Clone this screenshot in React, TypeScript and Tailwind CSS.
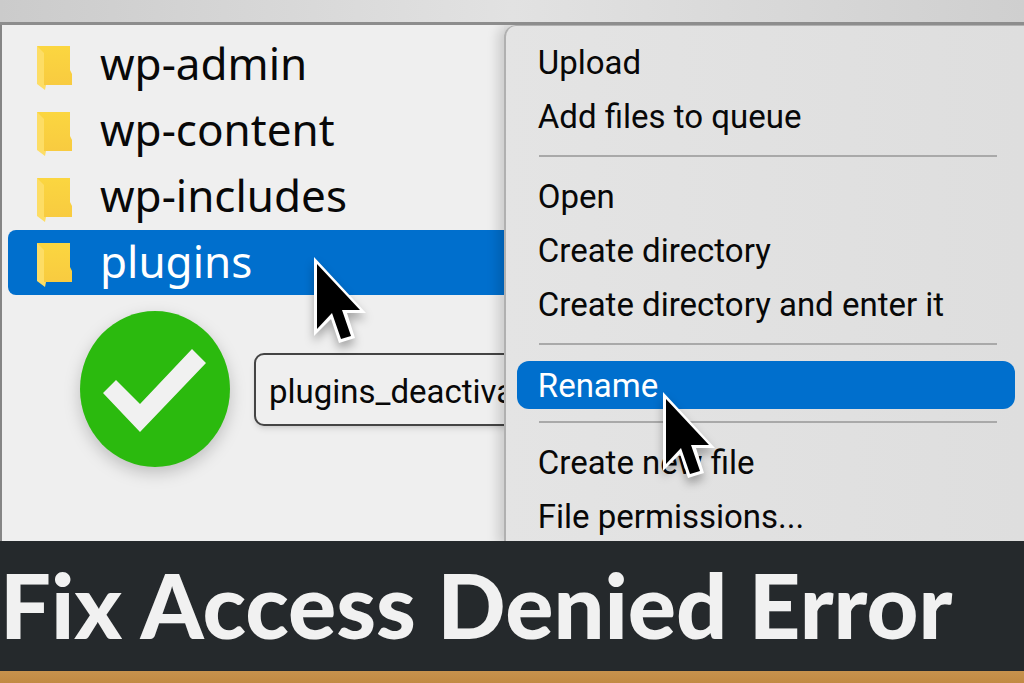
import React from "react";

interface CursorProps {
  className: string;
}

interface MenuItemProps {
  label: string;
  active?: boolean;
}

const folders = ["wp-admin", "wp-content", "wp-includes", "plugins"];

const menuGroups = [
  ["Upload", "Add files to queue"],
  ["Open", "Create directory", "Create directory and enter it"],
  ["Rename"],
  ["Create new file", "File permissions..."],
];

const FolderIcon: React.FC = () => (
  <svg viewBox="0 0 35 45" className="w-[35px] h-[45px] shrink-0 mt-1.5" aria-hidden="true">
    <defs>
      <linearGradient id="folder" x1="0" y1="0" x2="0" y2="1">
        <stop offset="0" stopColor="#fbd640" />
        <stop offset="1" stopColor="#f8cb40" />
      </linearGradient>
    </defs>
    <path d="M0 0H33V24L35 28V39H7Z" fill="url(#folder)" />
    <path d="M0 0L7 7V39H9L8 44L0 38Z" fill="#fddd65" />
  </svg>
);

const Cursor: React.FC<CursorProps> = ({ className }) => (
  <svg
    viewBox="0 0 53 88"
    className={`absolute w-[53px] h-[88px] overflow-visible drop-shadow-[0_6px_5px_rgba(0,0,0,0.3)] ${className}`}
    aria-hidden="true"
  >
    <path d="M0 0L52 56L33 56L41 81L25 86L17 62L0 79Z" fill="#fff" />
    <path d="M3 7L46 53L28 53L37 79L27 82L18 56L3 72Z" fill="#000" />
  </svg>
);

const CheckBadge: React.FC = () => (
  <svg
    viewBox="0 0 150 156"
    className="w-[150px] h-[156px] shrink-0 drop-shadow-[0_6px_8px_rgba(0,0,0,0.2)]"
    aria-hidden="true"
  >
    <ellipse cx="75" cy="78" rx="75" ry="78" fill="#2bba0e" />
    <path d="M23 82L36 69L60 93L112 38L126 52L60 121Z" fill="#f1f1f1" />
  </svg>
);

const MenuItem: React.FC<MenuItemProps> = ({ label, active }) => (
  <button
    role="menuitem"
    className={
      active
        ? "relative block w-full h-12 mt-1 pl-[21px] text-left rounded-xl bg-[#006fcd] text-white"
        : "block w-full h-[54px] pl-[21px] text-left"
    }
  >
    {label}
    {active && <Cursor className="left-[146px] top-[31px] z-10" />}
  </button>
);

const App: React.FC = () => {
  return (
    <div className="min-h-screen flex flex-col bg-[#ececec] text-[#080808] font-['Noto_Sans',sans-serif]">
      {/* Window edge */}
      <div className="h-[25px] border-b-[3px] border-[#8d8d8d] bg-linear-to-r from-[#cbcbcb] via-[#e2e2e2] to-[#cfcfcf]" />

      <main className="flex-1 flex overflow-hidden">
        {/* Folder list */}
        <section className="w-[49.2%] overflow-hidden border-l-2 border-[#858585] bg-[#efefef] pt-[7px] pl-1.5">
          <ul className="relative">
            {folders.map((name) => (
              <li
                key={name}
                className={
                  name === "plugins"
                    ? "flex items-center h-[65px] pl-[29px] gap-7 rounded-l-lg bg-[#006fcd] text-white text-[44px]"
                    : "flex items-center h-[66px] pl-[29px] gap-7 text-[44px]"
                }
              >
                <FolderIcon />
                <span className="leading-none pb-1">{name}</span>
              </li>
            ))}
            <Cursor className="left-[306px] top-[225px]" />
          </ul>

          <div className="flex items-center gap-6 mt-4 pl-[72px]">
            <CheckBadge />
            <input
              aria-label="New name"
              defaultValue="plugins_deactivated"
              className="w-[360px] h-[73px] shrink-0 px-[13px] pt-1 font-[Roboto,sans-serif] text-[33px] rounded-[10px] border-2 border-[#444] bg-[#efefef] shadow-md outline-none"
            />
          </div>
        </section>

        {/* Context menu */}
        <div
          role="menu"
          className="relative flex-1 flex flex-col -mb-1 pt-[9px] pl-[11px] pr-[9px] rounded-tl-xl border-l-2 border-t border-[#b0b0b0] bg-linear-to-r from-[#e4e4e4] to-[#dedede] shadow-[-6px_0_12px_rgba(0,0,0,0.15)] font-[Roboto,sans-serif] text-[33px] leading-none"
        >
          {menuGroups.map((group, i) => (
            <React.Fragment key={group[0]}>
              {i > 0 && <hr className="my-3 ml-[22px] mr-[18px] border-t-2 border-[#a9a9a9]" />}
              {group.map((label) => (
                <MenuItem key={label} label={label} active={label === "Rename"} />
              ))}
            </React.Fragment>
          ))}
        </div>
      </main>

      {/* Banner */}
      <header className="relative h-[130px] flex items-center bg-[#25292c] overflow-hidden">
        <h1 className="pb-1 font-['Lato',sans-serif] font-black text-[90px] leading-none whitespace-nowrap text-[#f1f1f1]">
          Fix Access Denied Error
        </h1>
      </header>
      <div className="relative h-3 bg-linear-to-b from-[#c7924d] to-[#c18a43]" />
    </div>
  );
};

export default App;
